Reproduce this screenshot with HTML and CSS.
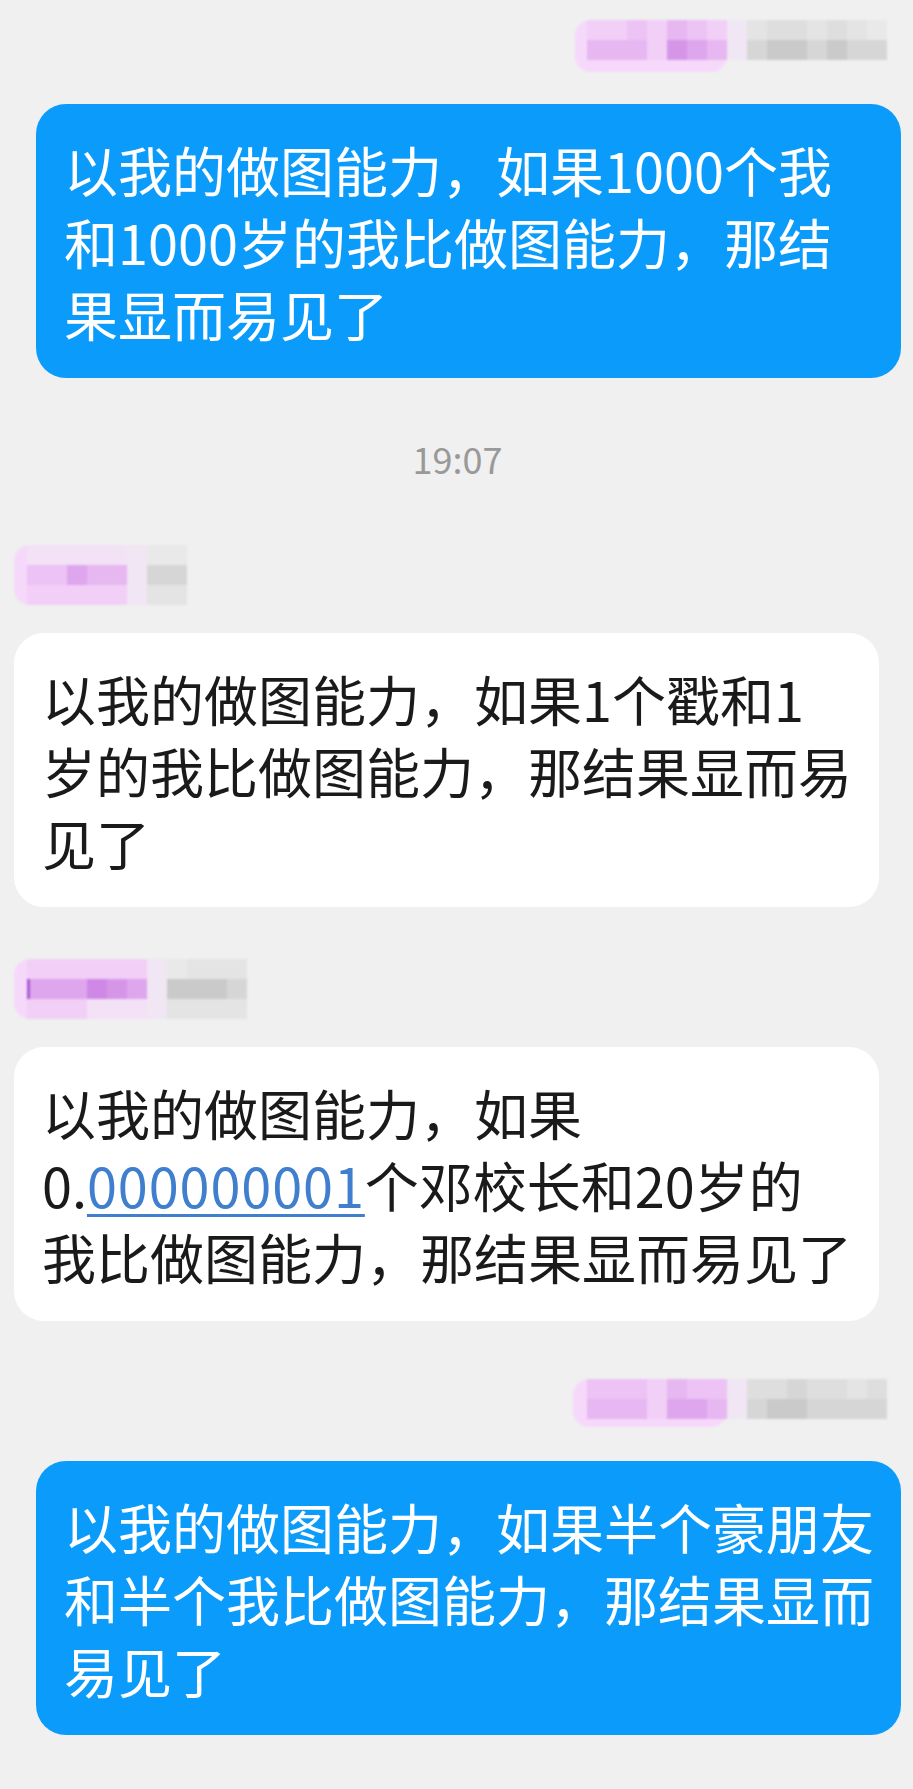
FILE: index.html
```html
<!DOCTYPE html>
<html lang="zh-CN">

<head>
    <meta charset="UTF-8">
    <meta name="viewport" content="width=device-width, initial-scale=1.0">
    <title>聊天记录</title>
    <link rel="stylesheet" href="styles.css">
</head>

<body>
    <div class="chat">
        <div class="msg sent">
            <div class="name">
                <div class="mosaic">
                    <div class="blob">
                        <div class="row"><i class="p1"></i><i class="p1"></i><i class="p2"></i><i class="p1"></i><i class="p3"></i><i class="p2"></i><i class="p1"></i></div>
                        <div class="row"><i class="p3"></i><i class="p3"></i><i class="p3"></i><i class="p1"></i><i class="p5"></i><i class="p4"></i><i class="p3"></i></div>
                    </div>
                    <div class="fade">
                        <div class="row"><i class="px"></i><i class="g1"></i><i class="g2"></i><i class="g2"></i><i class="g1"></i><i class="g2"></i><i class="g1"></i><i class="g0"></i></div>
                        <div class="row"><i class="px"></i><i class="g3"></i><i class="g4"></i><i class="g4"></i><i class="g3"></i><i class="g4"></i><i class="g3"></i><i class="g3"></i></div>
                    </div>
                </div>
            </div>
            <div class="bubble">以我的做图能力，如果1000个我<br>和1000岁的我比做图能力，那结<br>果显而易见了</div>
        </div>

        <div class="time">19:07</div>

        <div class="msg recv">
            <div class="name">
                <div class="mosaic">
                    <div class="blob flat">
                        <div class="row"><i class="p0"></i><i class="p0"></i><i class="p0"></i><i class="p0"></i><i class="p0"></i></div>
                        <div class="row"><i class="p2"></i><i class="p2"></i><i class="p4"></i><i class="p3"></i><i class="p3"></i></div>
                        <div class="row"><i class="p1"></i><i class="p1"></i><i class="p1"></i><i class="p1"></i><i class="p1"></i></div>
                    </div>
                    <div class="fade">
                        <div class="row"><i class="px"></i><i class="g0"></i><i class="g0"></i></div>
                        <div class="row"><i class="px"></i><i class="g3"></i><i class="g3"></i></div>
                        <div class="row"><i class="px"></i><i class="g1"></i><i class="g1"></i></div>
                    </div>
                </div>
            </div>
            <div class="bubble">以我的做图能力，如果1个戳和1<br>岁的我比做图能力，那结果显而易<br>见了</div>
        </div>

        <div class="msg recv">
            <div class="name">
                <div class="mosaic">
                    <div class="blob flat">
                        <div class="row"><i class="p1"></i><i class="p1"></i><i class="p1"></i><i class="p1"></i><i class="p1"></i><i class="p1"></i></div>
                        <div class="row"><i class="p4 edge"></i><i class="p4"></i><i class="p4"></i><i class="p6"></i><i class="p5"></i><i class="p4"></i></div>
                        <div class="row"><i class="p1"></i><i class="p1"></i><i class="p1"></i><i class="p0"></i><i class="p0"></i><i class="p0"></i></div>
                    </div>
                    <div class="fade">
                        <div class="row"><i class="px"></i><i class="g0"></i><i class="g1"></i><i class="g1"></i><i class="g1"></i></div>
                        <div class="row"><i class="px"></i><i class="g4"></i><i class="g4"></i><i class="g4"></i><i class="g3"></i></div>
                        <div class="row"><i class="px"></i><i class="g1"></i><i class="g1"></i><i class="g1"></i><i class="g1"></i></div>
                    </div>
                </div>
            </div>
            <div class="bubble">以我的做图能力，如果<br>0.<a href="#">000000001</a>个邓校长和20岁的<br>我比做图能力，那结果显而易见了</div>
        </div>

        <div class="msg sent">
            <div class="name">
                <div class="mosaic">
                    <div class="blob short">
                        <div class="row"><i class="p2"></i><i class="p2"></i><i class="p2"></i><i class="p1"></i><i class="p3"></i><i class="p2"></i><i class="p2"></i></div>
                        <div class="row"><i class="p3"></i><i class="p3"></i><i class="p3"></i><i class="p1"></i><i class="p4"></i><i class="p4"></i><i class="p3"></i></div>
                    </div>
                    <div class="fade">
                        <div class="row"><i class="px"></i><i class="g2"></i><i class="g2"></i><i class="g3"></i><i class="g2"></i><i class="g2"></i><i class="g1"></i><i class="g2"></i></div>
                        <div class="row"><i class="px"></i><i class="g3"></i><i class="g4"></i><i class="g4"></i><i class="g3"></i><i class="g3"></i><i class="g3"></i><i class="g3"></i></div>
                    </div>
                </div>
            </div>
            <div class="bubble">以我的做图能力，如果半个豪朋友<br>和半个我比做图能力，那结果显而<br>易见了</div>
        </div>
    </div>
</body>

</html>
```

FILE: styles.css
```css
body {
    margin: 0;
    background-color: #f0f0f0;
    font-family: "Noto Sans CJK SC", "Noto Sans", sans-serif;
}

.chat {
    display: flex;
    flex-direction: column;
    gap: 52px;
    padding: 16px 12px 40px 14px;
}

.msg {
    display: flex;
    flex-direction: column;
    align-items: flex-start;
}

.msg.sent {
    align-items: flex-end;
}

/* blurred sender names */
.name {
    height: 60px;
    display: flex;
    align-items: center;
}

.sent .name {
    margin-right: 14px;
}

.mosaic {
    display: flex;
    align-items: flex-start;
    filter: blur(1.2px);
}

.blob {
    background-color: #f6d8fb;
    border-radius: 16px;
    padding: 0 0 12px 12px;
}

.blob.flat {
    padding: 0 0 0 13px;
}

.blob.short {
    padding: 0 0 8px 14px;
}

.row {
    display: flex;
}

.row i {
    width: 20px;
    height: 20px;
}

.p0 { background-color: #f3e1f6; }
.p1 { background-color: #f2cff7; }
.p2 { background-color: #ecc3f4; }
.p3 { background-color: #e6b7f1; }
.p4 { background-color: #dea6ed; }
.p5 { background-color: #d596e8; }
.p6 { background-color: #cf88e6; }
.px { background-color: #f1e6f3; }
.g0 { background-color: #e9e9e9; }
.g1 { background-color: #e4e4e4; }
.g2 { background-color: #dedede; }
.g3 { background-color: #d6d6d6; }
.g4 { background-color: #cacaca; }

.edge {
    box-shadow: inset 3px 0 0 #a65ad2;
}

/* bubbles */
.bubble {
    width: 865px;
    box-sizing: border-box;
    margin-top: 28px;
    padding: 30px 28px 28px;
    border-radius: 30px;
    font-size: 54px;
    line-height: 72px;
    white-space: nowrap;
}

.sent .bubble {
    background-color: #0b9bfb;
    color: #ffffff;
}

.recv .bubble {
    background-color: #ffffff;
    color: #1a1a1a;
}

.bubble a {
    color: #3f7fce;
    letter-spacing: 0.9px;
    text-decoration: underline;
    text-decoration-thickness: 3px;
    text-underline-offset: 6px;
}

.time {
    text-align: center;
    font-size: 36px;
    line-height: 57px;
    padding-bottom: 6px;
    color: #999999;
}
```
